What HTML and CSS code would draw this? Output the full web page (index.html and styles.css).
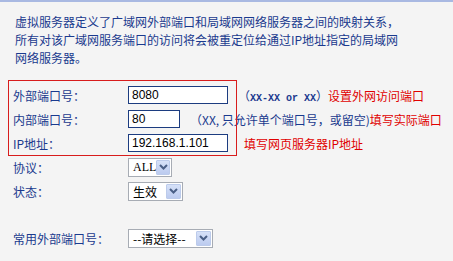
FILE: index.html
```html
<!DOCTYPE html>
<html lang="zh-CN">
<head>
<meta charset="utf-8">
<title>虚拟服务器</title>
<link rel="stylesheet" href="styles.css">
</head>
<body>
<div class="page">
  <p class="intro">虚拟服务器定义了广域网外部端口和局域网网络服务器之间的映射关系，<br>所有对该广域网服务端口的访问将会被重定位给通过IP地址指定的局域网<br>网络服务器。</p>
  <div class="form">
    <div class="annot-box"></div>
    <div class="row">
      <span class="label">外部端口号：</span>
      <div class="ctrl">
        <input class="field wide" type="text" value="8080">
        <span class="hint">（<span class="mono">XX-XX or XX</span>）</span><span class="note">设置外网访问端口</span>
      </div>
    </div>
    <div class="row">
      <span class="label">内部端口号：</span>
      <div class="ctrl">
        <input class="field narrow" type="text" value="80">
        <span class="hint">（XX, 只允许单个端口号，或留空)</span><span class="note">填写实际端口</span>
      </div>
    </div>
    <div class="row">
      <span class="label">IP地址：</span>
      <div class="ctrl">
        <input class="field wide" type="text" value="192.168.1.101">
        <span class="note note-gap">填写网页服务器IP地址</span>
      </div>
    </div>
    <div class="row">
      <span class="label">协议：</span>
      <div class="ctrl">
        <div class="select sel-all"><span class="sel-text serif">ALL</span><span class="sel-btn"><svg width="9" height="6" viewBox="0 0 9 6"><polyline points="1,1 4.5,4.5 8,1" fill="none" stroke="#4a5f86" stroke-width="2"/></svg></span></div>
      </div>
    </div>
    <div class="row">
      <span class="label">状态：</span>
      <div class="ctrl">
        <div class="select sel-state"><span class="sel-text">生效</span><span class="sel-btn"><svg width="9" height="6" viewBox="0 0 9 6"><polyline points="1,1 4.5,4.5 8,1" fill="none" stroke="#4a5f86" stroke-width="2"/></svg></span></div>
      </div>
    </div>
    <div class="row spacer"></div>
    <div class="row">
      <span class="label">常用外部端口号：</span>
      <div class="ctrl">
        <div class="select sel-common"><span class="sel-text">--请选择--</span><span class="sel-btn"><svg width="9" height="6" viewBox="0 0 9 6"><polyline points="1,1 4.5,4.5 8,1" fill="none" stroke="#4a5f86" stroke-width="2"/></svg></span></div>
      </div>
    </div>
  </div>
</div>
</body>
</html>
```

FILE: styles.css
```css
html, body {
  margin: 0;
  padding: 0;
}
body {
  width: 453px;
  height: 261px;
  overflow: hidden;
  background: #f4f4f4;
  border-top: 2px solid #a9b9e2;
  box-sizing: border-box;
  font-family: "Noto Sans CJK SC", "Liberation Sans", sans-serif;
  font-size: 12px;
  color: #1a3a8e;
}
.page {
  padding-top: 11px;
}
.intro {
  margin: 0;
  padding-left: 15px;
  line-height: 18px;
  white-space: nowrap;
}
.form {
  position: relative;
  margin-top: 16px;
  padding-left: 13px;
}
.annot-box {
  position: absolute;
  left: 8px;
  top: -3px;
  width: 229px;
  height: 76px;
  box-sizing: border-box;
  border: 1px solid #d81c1c;
  pointer-events: none;
}
.row {
  display: grid;
  grid-template-columns: 115px auto;
  align-items: center;
  height: 24px;
}
.row.spacer {
  height: 23px;
}
.label {
  white-space: nowrap;
}
.ctrl {
  display: flex;
  align-items: center;
  white-space: nowrap;
}
.field {
  box-sizing: border-box;
  height: 18px;
  margin: 0;
  padding: 0 3px;
  border: 1px solid #1c3c80;
  background: #fff;
  color: #000;
  font-family: "Liberation Sans", sans-serif;
  font-size: 12px;
  outline: none;
}
.field.wide { width: 100px; }
.field.narrow { width: 52px; }
.hint {
  margin-left: 10px;
}
.mono {
  font-family: "Liberation Mono", monospace;
  font-size: 10px;
  font-weight: bold;
}
.note {
  color: #e00000;
}
.note-gap {
  margin-left: 16px;
}
.select {
  box-sizing: border-box;
  height: 19px;
  display: flex;
  align-items: center;
  justify-content: space-between;
  border: 1px solid #a7acb4;
  background: #fff;
  color: #000;
  padding-right: 1px;
}
.sel-all { width: 44px; }
.sel-state { width: 55px; }
.sel-common { width: 85px; }
.sel-text {
  padding-left: 4px;
  line-height: 17px;
}
.sel-text.serif {
  font-family: "Liberation Serif", serif;
  font-size: 12px;
}
.sel-btn {
  box-sizing: border-box;
  width: 15px;
  height: 15px;
  display: flex;
  align-items: center;
  justify-content: center;
  border: 1px solid #bccbeb;
  border-radius: 1px;
  background: linear-gradient(#d6e1f8, #bccbef);
}
```
